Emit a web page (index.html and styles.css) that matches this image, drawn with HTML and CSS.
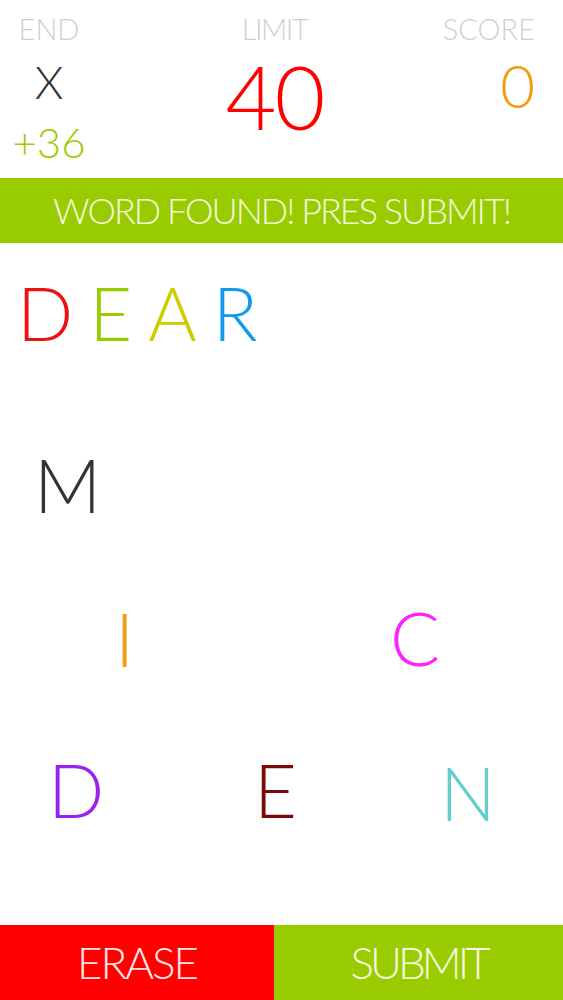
FILE: index.html
```html
<!DOCTYPE html>
<html>
<head>
<meta charset="utf-8">
<link rel="stylesheet" href="styles.css">
</head>
<body>
<div class="app">
  <header class="stats">
    <div class="col col-left">
      <div class="label">END</div>
      <div class="end-x">X</div>
      <div class="bonus">+36</div>
    </div>
    <div class="col col-mid">
      <div class="label label-limit">LIMIT</div>
      <div class="limit">40</div>
    </div>
    <div class="col col-right">
      <div class="label">SCORE</div>
      <div class="score">0</div>
    </div>
  </header>
  <div class="banner">WORD FOUND! PRES SUBMIT!</div>
  <main class="board">
    <div class="word">
      <span class="c-red">D</span><span class="c-green">E</span><span class="c-yellow">A</span><span class="c-blue">R</span>
    </div>
    <div class="tile t-m">M</div>
    <div class="tile t-i">I</div>
    <div class="tile t-c">C</div>
    <div class="tile t-d">D</div>
    <div class="tile t-e">E</div>
    <div class="tile t-n">N</div>
  </main>
  <footer class="actions">
    <button class="btn btn-erase">ERASE</button>
    <button class="btn btn-submit">SUBMIT</button>
  </footer>
</div>
</body>
</html>
```
FILE: styles.css
```css
html, body {
  margin: 0;
  padding: 0;
  background: #fff;
}
body {
  font-family: "Lato", "Liberation Sans", sans-serif;
  font-weight: 300;
}
.app {
  width: 563px;
  height: 1000px;
  display: flex;
  flex-direction: column;
  overflow: hidden;
}
.stats {
  height: 178px;
  box-sizing: border-box;
  padding: 11px 28px 0 14px;
  display: grid;
  grid-template-columns: 1fr 1fr 1fr;
}
.col {
  display: flex;
  flex-direction: column;
}
.col-left {
  width: 70px;
  align-items: center;
}
.col-mid {
  align-items: center;
}
.col-right {
  align-items: flex-end;
}
.label {
  font-size: 29px;
  line-height: 36px;
  color: #cfcfd3;
}
.label-limit {
  letter-spacing: -1.5px;
}
.end-x {
  font-size: 46px;
  line-height: 50px;
  color: #333;
  margin-top: 10px;
}
.bonus {
  font-size: 42px;
  line-height: 44px;
  color: #99cc00;
  margin-top: 13px;
}
.limit {
  font-size: 88px;
  line-height: 90px;
  color: #f00;
  margin-top: 4px;
  letter-spacing: -2px;
}
.score {
  font-size: 60px;
  line-height: 64px;
  color: #f39c12;
  margin-top: 6px;
}
.banner {
  height: 65px;
  background: #99cc00;
  color: #f4f9dc;
  font-size: 36px;
  line-height: 65px;
  letter-spacing: -2px;
  text-align: center;
}
.board {
  flex: 1;
  position: relative;
}
.word {
  padding: 30px 0 0 17px;
  font-size: 74px;
  line-height: 80px;
  letter-spacing: 16px;
}
.c-red { color: #ee1111; }
.c-green { color: #99cc00; }
.c-yellow { color: #cccc00; }
.c-blue { color: #1199ee; }
.tile {
  position: absolute;
  font-size: 74px;
  line-height: 80px;
}
.t-m { left: 34px; top: 202px; color: #333; }
.t-i { left: 115px; top: 356px; color: #f39c12; }
.t-c { left: 390px; top: 355px; color: #ff22ff; }
.t-d { left: 48px; top: 507px; color: #9922ee; }
.t-e { left: 254px; top: 507px; color: #7a0a0a; }
.t-n { left: 440px; top: 510px; color: #66cccc; }
.actions {
  height: 75px;
  display: flex;
}
.btn {
  border: 0;
  margin: 0;
  padding: 0;
  font-family: inherit;
  font-weight: 300;
  font-size: 44px;
  line-height: 75px;
}
.btn-erase {
  width: 274px;
  background: #ff0000;
  color: #ffe4e4;
  letter-spacing: -2px;
}
.btn-submit {
  flex: 1;
  background: #99cc00;
  color: #f4f9dc;
  letter-spacing: -4px;
}
```
